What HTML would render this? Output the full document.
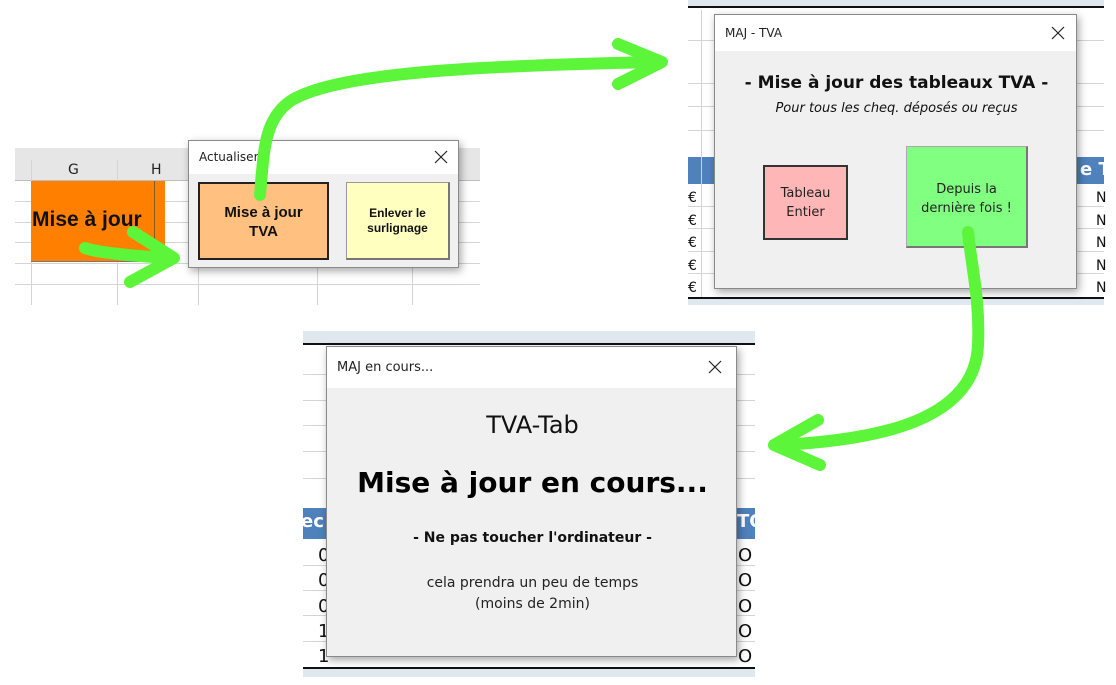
<!DOCTYPE html>
<html><head><meta charset="utf-8"><style>
body{margin:0;width:1116px;height:685px;background:#fff;position:relative;overflow:hidden;font-family:"DejaVu Sans","Liberation Sans",sans-serif;}
.a{position:absolute;box-sizing:border-box;}
.dlg{background:#f0f0f0;border:1px solid #8a8a8a;box-shadow:2px 3px 8px rgba(0,0,0,.35);}
.tb{background:#fff;position:absolute;left:0;right:0;top:0;}
.hl{position:absolute;height:1px;background:#d4d4d4;}
.vl{position:absolute;width:1px;background:#d4d4d4;}
.c{text-align:center;}
</style></head><body>

<!-- Panel 1 -->
<div class="a" style="left:15px;top:148px;width:465px;height:33px;background:#e6e6e6;border-bottom:1px solid #bdbdbd"></div>
<div class="a" style="left:68px;top:162px;font-size:14px;color:#222">G</div>
<div class="a" style="left:151px;top:162px;font-size:14px;color:#222">H</div>
<div class="vl" style="left:31px;top:160px;height:145px"></div>
<div class="vl" style="left:117px;top:160px;height:145px"></div>
<div class="vl" style="left:198px;top:160px;height:145px"></div>
<div class="vl" style="left:317px;top:160px;height:145px"></div>
<div class="vl" style="left:412px;top:160px;height:145px"></div>
<div class="hl" style="left:15px;top:201px;width:465px"></div>
<div class="hl" style="left:15px;top:222px;width:465px"></div>
<div class="hl" style="left:15px;top:242px;width:465px"></div>
<div class="hl" style="left:15px;top:263px;width:465px"></div>
<div class="hl" style="left:15px;top:284px;width:465px"></div>
<div class="a" style="left:31px;top:181px;width:134px;height:81px;background:#ff8000;border-bottom:1px solid #777"></div>
<div class="a" style="left:154px;top:181px;width:1px;height:81px;background:#8a5a20"></div>
<div class="a" style="left:32px;top:208px;font-family:'Liberation Sans',sans-serif;font-weight:bold;font-size:21px;color:#111">Mise à jour</div>
<div class="a dlg" style="left:188px;top:140px;width:271px;height:128px">
 <div class="tb" style="height:33px"><div class="a" style="left:10px;top:9px;font-size:12px;color:#222">Actualiser</div>
 <svg class="a" style="left:245px;top:9px" width="14" height="14"><path d="M1,1L13,13M13,1L1,13" stroke="#222" stroke-width="1.2"/></svg></div>
 <div class="a c" style="left:9px;top:41px;width:131px;height:78px;background:#ffc080;border:2px solid #222;font-weight:bold;font-size:15px;line-height:19px;padding-top:19px;font-family:'Liberation Sans',sans-serif;color:#111">Mise à jour<br>TVA</div>
 <div class="a c" style="left:157px;top:41px;width:104px;height:78px;background:#ffffc0;border:1px solid #999;border-right:2px solid #777;border-bottom:2px solid #777;font-weight:bold;font-size:12px;line-height:15px;padding-top:23px;font-family:'Liberation Sans',sans-serif;color:#111">Enlever le<br>surlignage</div>
</div>

<!-- Panel 2 -->
<div class="a" style="left:688px;top:0;width:416px;height:8px;background:#dfe8ef;border-bottom:2px solid #111"></div>
<div class="a" style="left:688px;top:157px;width:416px;height:27px;background:#4f81bd"></div>
<div class="a" style="left:1080px;top:159px;font-size:18px;font-weight:bold;color:#fff">e T</div>
<div class="hl" style="left:688px;top:40px;width:416px"></div>
<div class="hl" style="left:688px;top:83px;width:416px"></div>
<div class="hl" style="left:688px;top:106px;width:416px"></div>
<div class="hl" style="left:688px;top:130px;width:416px"></div>
<div class="hl" style="left:688px;top:206px;width:416px"></div>
<div class="hl" style="left:688px;top:228px;width:416px"></div>
<div class="hl" style="left:688px;top:251px;width:416px"></div>
<div class="hl" style="left:688px;top:273px;width:416px"></div>
<div class="vl" style="left:701px;top:10px;height:290px"></div>
<div class="a" style="left:688px;top:187px;font-size:14px;line-height:22.5px;color:#111">€<br>€<br>€<br>€<br>€</div>
<div class="a" style="left:1096px;top:187px;font-size:14px;line-height:22.5px;color:#111">N<br>N<br>N<br>N<br>N</div>
<div class="a" style="left:688px;top:297px;width:416px;height:8px;background:#dfe8ef;border-top:2px solid #111"></div>
<div class="a dlg" style="left:714px;top:14px;width:363px;height:275px">
 <div class="tb" style="height:36px"><div class="a" style="left:10px;top:11px;font-size:12px;color:#222">MAJ - TVA</div>
 <svg class="a" style="left:336px;top:11px" width="14" height="14"><path d="M1,1L13,13M13,1L1,13" stroke="#222" stroke-width="1.2"/></svg></div>
 <div class="a c" style="left:0;top:58px;width:363px;font-weight:bold;font-size:17px;color:#111">- Mise à jour des tableaux TVA -</div>
 <div class="a c" style="left:0;top:86px;width:363px;font-style:italic;font-size:13px;color:#111">Pour tous les cheq. déposés ou reçus</div>
 <div class="a c" style="left:48px;top:150px;width:85px;height:75px;background:#ffb6b6;border:2px solid #333;font-size:13px;line-height:19px;padding-top:17px;color:#222">Tableau<br>Entier</div>
 <div class="a c" style="left:191px;top:131px;width:122px;height:102px;background:#80ff80;border:1px solid #aaa;border-right:2px solid #777;border-bottom:2px solid #777;font-size:13px;line-height:19px;padding-top:33px;color:#222">Depuis la<br>dernière fois !</div>
</div>

<!-- Panel 3 -->
<div class="a" style="left:303px;top:331px;width:452px;height:14px;background:#dfe8ef;border-bottom:2px solid #111"></div>
<div class="a" style="left:303px;top:508px;width:452px;height:31px;background:#4f81bd"></div>
<div class="a" style="left:301px;top:511px;font-size:18px;font-weight:bold;color:#fff">ec</div>
<div class="a" style="left:737px;top:511px;font-size:18px;font-weight:bold;color:#fff">TO</div>
<div class="hl" style="left:303px;top:374px;width:452px"></div>
<div class="hl" style="left:303px;top:400px;width:452px"></div>
<div class="hl" style="left:303px;top:425px;width:452px"></div>
<div class="hl" style="left:303px;top:451px;width:452px"></div>
<div class="hl" style="left:303px;top:478px;width:452px"></div>
<div class="hl" style="left:303px;top:565px;width:452px"></div>
<div class="hl" style="left:303px;top:590px;width:452px"></div>
<div class="hl" style="left:303px;top:615px;width:452px"></div>
<div class="hl" style="left:303px;top:641px;width:452px"></div>
<div class="a" style="left:318px;top:543px;font-size:18px;line-height:25.3px;color:#111">0<br>0<br>0<br>1<br>1</div>
<div class="a" style="left:738px;top:543px;font-size:18px;line-height:25.3px;color:#111">O<br>O<br>O<br>O<br>O</div>
<div class="a" style="left:303px;top:667px;width:452px;height:10px;background:#dfe8ef;border-top:2px solid #111"></div>
<div class="a dlg" style="left:326px;top:346px;width:411px;height:311px">
 <div class="tb" style="height:41px"><div class="a" style="left:10px;top:13px;font-size:13px;color:#222">MAJ en cours...</div>
 <svg class="a" style="left:381px;top:13px" width="14" height="14"><path d="M1,1L13,13M13,1L1,13" stroke="#222" stroke-width="1.2"/></svg></div>
 <div class="a c" style="left:0;top:64px;width:411px;font-size:24px;color:#111">TVA-Tab</div>
 <div class="a c" style="left:0;top:119px;width:411px;font-size:28px;font-weight:bold;color:#000">Mise à jour en cours...</div>
 <div class="a c" style="left:0;top:183px;width:411px;font-size:14px;font-weight:bold;color:#111">- Ne pas toucher l'ordinateur -</div>
 <div class="a c" style="left:0;top:226px;width:411px;font-size:14px;line-height:21px;color:#222">cela prendra un peu de temps<br>(moins de 2min)</div>
</div>

<!-- Arrows -->
<svg class="a" style="left:0;top:0" width="1116" height="685" viewBox="0 0 1116 685">
<g fill="none" stroke="#5cf53a" stroke-width="12" stroke-linecap="round" stroke-linejoin="round">
<path d="M85,248 C95,252 130,256 170,258"/>
<path d="M133,232 L174,258 L130,282"/>
<path d="M260,195 C264,150 264,118 292,100 C335,75 450,66 660,62"/>
<path d="M618,44 L662,62 L618,84"/>
<path d="M968,232 C972,270 980,300 978,345 C975,420 880,440 780,445"/>
<path d="M818,420 L774,445 L820,465"/>
</g>
</svg>
</body></html>
